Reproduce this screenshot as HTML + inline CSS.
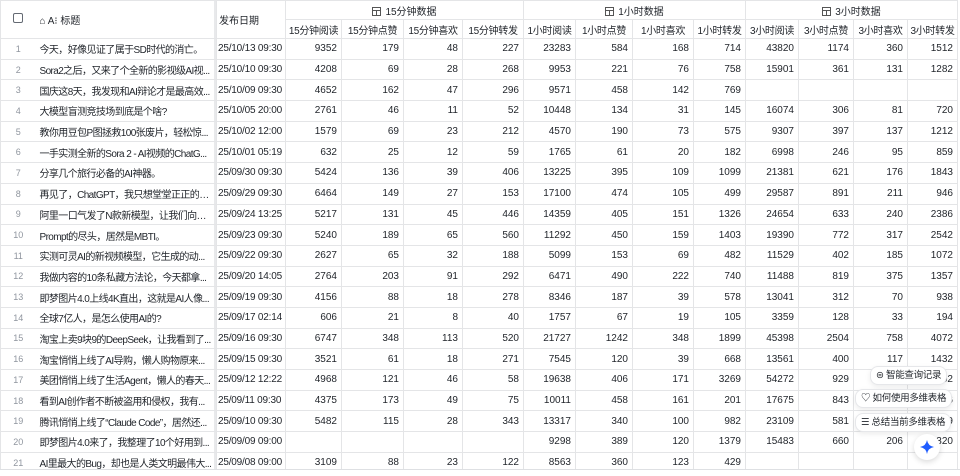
<!DOCTYPE html>
<html><head><meta charset="utf-8">
<style>
*{margin:0;padding:0;box-sizing:border-box}
body{width:960px;height:476px;background:#fff;overflow:hidden;font-family:"Liberation Sans","Noto Sans CJK SC",sans-serif;font-size:10px;color:#1f2329;position:relative}
.wrap{position:absolute;left:0;top:0;width:960px;height:470px;overflow:hidden;border-bottom:1px solid #dee0e3}
table{border-collapse:collapse;table-layout:fixed;width:957px}
td,th{border:1px solid #e4e5e7;white-space:nowrap;overflow:hidden;font-weight:normal;padding:0 4px}
th{height:19px;font-size:10px;color:#1f2329}
tbody td{height:20.7px;text-align:right}
tbody td.n{text-align:center;color:#8f959e;font-size:9px;border-right:none}
tbody td.t{text-align:left;text-overflow:ellipsis;border-left:none;box-shadow:inset -2px 0 0 #e8e9eb;padding-left:4px;letter-spacing:-0.6px}
tbody td.d{text-align:left;padding:0 1px;font-size:10px;letter-spacing:-0.2px}
.grp{text-align:center}
.sub{text-align:center;padding:0 1px;letter-spacing:-0.3px}
.ico{display:inline-block;width:9px;height:9px;border:1px solid #555;vertical-align:-1px;margin-right:4px;position:relative}
.ico:after{content:"";position:absolute;left:0;right:0;top:2px;border-top:1px solid #555}
.ico:before{content:"";position:absolute;left:3px;top:2px;bottom:0;border-left:1px solid #555}
.cb{display:inline-block;width:10px;height:10px;border:1px solid #646a73;border-radius:2px}
.pop{position:absolute;background:#fff;border:1px solid #e6e7ea;border-radius:8px;box-shadow:0 2px 6px rgba(0,0,0,.08);font-size:9.5px;color:#1f2329;padding:0 5px;height:19px;line-height:17px;white-space:nowrap;letter-spacing:-0.3px}
.star{position:absolute;left:914px;top:434px;width:26px;height:26px;border-radius:50%;background:#fff;box-shadow:0 2px 6px rgba(0,0,0,.15)}
</style></head><body>
<div class="wrap">
<table>
<colgroup><col style="width:35px"><col style="width:181px"><col style="width:69px"><col style="width:56px"><col style="width:62px"><col style="width:59px"><col style="width:61px"><col style="width:52px"><col style="width:57px"><col style="width:61px"><col style="width:52px"><col style="width:53px"><col style="width:55px"><col style="width:54px"><col style="width:50px"></colgroup>
<thead>
<tr><th rowspan="2" style="border-right:none;height:38px"><span class="cb"></span></th><th rowspan="2" style="text-align:left;border-left:none;box-shadow:inset -2px 0 0 #e8e9eb">⌂ A⁝ 标题</th><th rowspan="2" style="text-align:left;padding:0 2px">发布日期</th><th colspan="4" class="grp" style="height:18px"><span class="ico"></span>15分钟数据</th><th colspan="4" class="grp"><span class="ico"></span>1小时数据</th><th colspan="4" class="grp"><span class="ico"></span>3小时数据</th></tr>
<tr><th class="sub">15分钟阅读</th><th class="sub">15分钟点赞</th><th class="sub">15分钟喜欢</th><th class="sub">15分钟转发</th><th class="sub">1小时阅读</th><th class="sub">1小时点赞</th><th class="sub">1小时喜欢</th><th class="sub">1小时转发</th><th class="sub">3小时阅读</th><th class="sub">3小时点赞</th><th class="sub">3小时喜欢</th><th class="sub">3小时转发</th></tr>
</thead>
<tbody>
<tr><td class="n">1</td><td class="t">今天，好像见证了属于SD时代的消亡。</td><td class="d">25/10/13 09:30</td><td>9352</td><td>179</td><td>48</td><td>227</td><td>23283</td><td>584</td><td>168</td><td>714</td><td>43820</td><td>1174</td><td>360</td><td>1512</td></tr>
<tr><td class="n">2</td><td class="t">Sora2之后，又来了个全新的影视级AI视...</td><td class="d">25/10/10 09:30</td><td>4208</td><td>69</td><td>28</td><td>268</td><td>9953</td><td>221</td><td>76</td><td>758</td><td>15901</td><td>361</td><td>131</td><td>1282</td></tr>
<tr><td class="n">3</td><td class="t">国庆这8天，我发现和AI辩论才是最高效...</td><td class="d">25/10/09 09:30</td><td>4652</td><td>162</td><td>47</td><td>296</td><td>9571</td><td>458</td><td>142</td><td>769</td><td></td><td></td><td></td><td></td></tr>
<tr><td class="n">4</td><td class="t">大模型盲测竞技场到底是个啥?</td><td class="d">25/10/05 20:00</td><td>2761</td><td>46</td><td>11</td><td>52</td><td>10448</td><td>134</td><td>31</td><td>145</td><td>16074</td><td>306</td><td>81</td><td>720</td></tr>
<tr><td class="n">5</td><td class="t">教你用豆包P图拯救100张废片，轻松惊...</td><td class="d">25/10/02 12:00</td><td>1579</td><td>69</td><td>23</td><td>212</td><td>4570</td><td>190</td><td>73</td><td>575</td><td>9307</td><td>397</td><td>137</td><td>1212</td></tr>
<tr><td class="n">6</td><td class="t">一手实测全新的Sora 2 - AI视频的ChatG...</td><td class="d">25/10/01 05:19</td><td>632</td><td>25</td><td>12</td><td>59</td><td>1765</td><td>61</td><td>20</td><td>182</td><td>6998</td><td>246</td><td>95</td><td>859</td></tr>
<tr><td class="n">7</td><td class="t">分享几个旅行必备的AI神器。</td><td class="d">25/09/30 09:30</td><td>5424</td><td>136</td><td>39</td><td>406</td><td>13225</td><td>395</td><td>109</td><td>1099</td><td>21381</td><td>621</td><td>176</td><td>1843</td></tr>
<tr><td class="n">8</td><td class="t">再见了，ChatGPT，我只想堂堂正正的当...</td><td class="d">25/09/29 09:30</td><td>6464</td><td>149</td><td>27</td><td>153</td><td>17100</td><td>474</td><td>105</td><td>499</td><td>29587</td><td>891</td><td>211</td><td>946</td></tr>
<tr><td class="n">9</td><td class="t">阿里一口气发了N款新模型，让我们向源...</td><td class="d">25/09/24 13:25</td><td>5217</td><td>131</td><td>45</td><td>446</td><td>14359</td><td>405</td><td>151</td><td>1326</td><td>24654</td><td>633</td><td>240</td><td>2386</td></tr>
<tr><td class="n">10</td><td class="t">Prompt的尽头，居然是MBTI。</td><td class="d">25/09/23 09:30</td><td>5240</td><td>189</td><td>65</td><td>560</td><td>11292</td><td>450</td><td>159</td><td>1403</td><td>19390</td><td>772</td><td>317</td><td>2542</td></tr>
<tr><td class="n">11</td><td class="t">实测可灵AI的新视频模型，它生成的动...</td><td class="d">25/09/22 09:30</td><td>2627</td><td>65</td><td>32</td><td>188</td><td>5099</td><td>153</td><td>69</td><td>482</td><td>11529</td><td>402</td><td>185</td><td>1072</td></tr>
<tr><td class="n">12</td><td class="t">我做内容的10条私藏方法论，今天都拿...</td><td class="d">25/09/20 14:05</td><td>2764</td><td>203</td><td>91</td><td>292</td><td>6471</td><td>490</td><td>222</td><td>740</td><td>11488</td><td>819</td><td>375</td><td>1357</td></tr>
<tr><td class="n">13</td><td class="t">即梦图片4.0上线4K直出，这就是AI人像...</td><td class="d">25/09/19 09:30</td><td>4156</td><td>88</td><td>18</td><td>278</td><td>8346</td><td>187</td><td>39</td><td>578</td><td>13041</td><td>312</td><td>70</td><td>938</td></tr>
<tr><td class="n">14</td><td class="t">全球7亿人，是怎么使用AI的?</td><td class="d">25/09/17 02:14</td><td>606</td><td>21</td><td>8</td><td>40</td><td>1757</td><td>67</td><td>19</td><td>105</td><td>3359</td><td>128</td><td>33</td><td>194</td></tr>
<tr><td class="n">15</td><td class="t">淘宝上卖9块9的DeepSeek，让我看到了...</td><td class="d">25/09/16 09:30</td><td>6747</td><td>348</td><td>113</td><td>520</td><td>21727</td><td>1242</td><td>348</td><td>1899</td><td>45398</td><td>2504</td><td>758</td><td>4072</td></tr>
<tr><td class="n">16</td><td class="t">淘宝悄悄上线了AI导购，懒人购物原来...</td><td class="d">25/09/15 09:30</td><td>3521</td><td>61</td><td>18</td><td>271</td><td>7545</td><td>120</td><td>39</td><td>668</td><td>13561</td><td>400</td><td>117</td><td>1432</td></tr>
<tr><td class="n">17</td><td class="t">美团悄悄上线了生活Agent，懒人的春天...</td><td class="d">25/09/12 12:22</td><td>4968</td><td>121</td><td>46</td><td>58</td><td>19638</td><td>406</td><td>171</td><td>3269</td><td>54272</td><td>929</td><td></td><td>5402</td></tr>
<tr><td class="n">18</td><td class="t">看到AI创作者不断被盗用和侵权，我有...</td><td class="d">25/09/11 09:30</td><td>4375</td><td>173</td><td>49</td><td>75</td><td>10011</td><td>458</td><td>161</td><td>201</td><td>17675</td><td>843</td><td></td><td>466</td></tr>
<tr><td class="n">19</td><td class="t">腾讯悄悄上线了“Claude Code”，居然还...</td><td class="d">25/09/10 09:30</td><td>5482</td><td>115</td><td>28</td><td>343</td><td>13317</td><td>340</td><td>100</td><td>982</td><td>23109</td><td>581</td><td></td><td>749</td></tr>
<tr><td class="n">20</td><td class="t">即梦图片4.0来了，我整理了10个好用到...</td><td class="d">25/09/09 09:00</td><td></td><td></td><td></td><td></td><td>9298</td><td>389</td><td>120</td><td>1379</td><td>15483</td><td>660</td><td>206</td><td>2320</td></tr>
<tr><td class="n">21</td><td class="t">AI里最大的Bug，却也是人类文明最伟大...</td><td class="d">25/09/08 09:00</td><td>3109</td><td>88</td><td>23</td><td>122</td><td>8563</td><td>360</td><td>123</td><td>429</td><td></td><td></td><td></td><td></td></tr>
</tbody>
</table>
</div>
<div class="pop" style="left:870px;top:366px">⊜ 智能查询记录</div>
<div class="pop" style="left:855px;top:389px">♡ 如何使用多维表格</div>
<div class="pop" style="left:855px;top:413px">☰ 总结当前多维表格</div>
<div class="star"><svg width="26" height="26" viewBox="0 0 26 26"><path d="M13 6 Q14 12 20 13 Q14 14 13 20 Q12 14 6 13 Q12 12 13 6Z" fill="#1f5cff"/></svg></div>
</body></html>
